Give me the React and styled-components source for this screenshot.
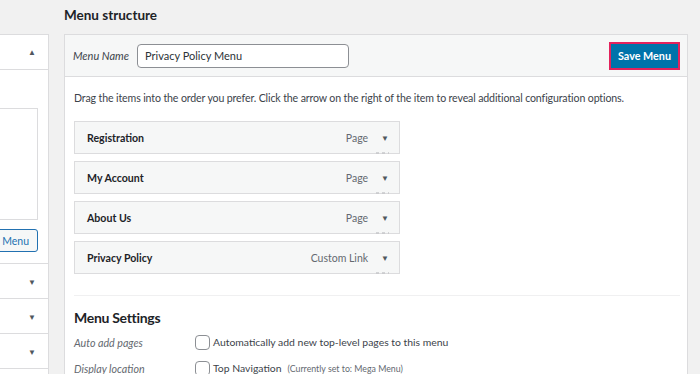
import React from "react";
import styled, { createGlobalStyle } from "styled-components";

const Global = createGlobalStyle`
  html, body { margin: 0; padding: 0; }
  body {
    background: #f1f1f1;
    font-family: Lato, "Open Sans", sans-serif;
    color: #1d2327;
    overflow: hidden;
  }
  * { box-sizing: border-box; }
`;

const Page = styled.div`
  display: flex;
  gap: 15px;
  width: 700px;
  height: 374px;
  overflow: hidden;
`;

const SideCol = styled.div`
  width: 49px;
  flex: none;
  padding-top: 34px;
  display: flex;
  justify-content: flex-end;
  overflow: hidden;
`;

const SidePanel = styled.div`
  width: 280px;
  flex: none;
  background: #fff;
  border: 1px solid #dcdcde;
  border-bottom: none;
`;

const SideHeader = styled.div`
  height: 35px;
  border-bottom: 1px solid #dcdcde;
  display: flex;
  align-items: center;
  justify-content: flex-end;
  padding-right: 12px;
`;

const Caret = styled.span`
  font-size: 8px;
  color: #50575e;
  line-height: 1;
`;

const SideBody = styled.div`
  padding: 38px 10px 11px 0;
  display: flex;
  flex-direction: column;
  align-items: flex-end;
  gap: 9px;
  border-bottom: 1px solid #dcdcde;
`;

const ListBox = styled.div`
  width: 260px;
  height: 112px;
  border: 1px solid #dcdcde;
  background: #fff;
`;

const AddButton = styled.button`
  font-family: inherit;
  font-size: 10.5px;
  height: 23px;
  padding: 0 8px;
  border: 1px solid #2271b1;
  border-radius: 3px;
  background: #f6f7f7;
  color: #2271b1;
`;

const SideRow = styled.div`
  height: 35px;
  border-bottom: 1px solid #dcdcde;
  display: flex;
  align-items: center;
  justify-content: flex-end;
  padding: 2px 12px 0 0;
`;

const MainCol = styled.div`
  flex: 1;
  margin-right: 12px;
  display: flex;
  flex-direction: column;
`;

const Title = styled.h2`
  flex: none;
  margin: 0;
  height: 34px;
  padding-top: 6px;
  font-size: 13.5px;
  font-weight: 700;
  line-height: 18px;
  color: #1d2327;
`;

const Panel = styled.div`
  flex: none;
  height: 400px;
  border: 1px solid #dcdcde;
  border-bottom: none;
  background: #fff;
`;

const PanelHeader = styled.div`
  height: 42px;
  background: #f6f7f7;
  border-bottom: 1px solid #dcdcde;
  display: flex;
  align-items: center;
  padding: 0 7px 0 8px;
`;

const NameLabel = styled.label`
  font-size: 11px;
  font-style: italic;
  color: #3c434a;
  margin-right: 8px;
`;

const NameInput = styled.div`
  width: 212px;
  height: 24px;
  border: 1px solid #8c8f94;
  border-radius: 4px;
  background: #fff;
  font-size: 11px;
  color: #2c3338;
  display: flex;
  align-items: center;
  padding-left: 7px;
`;

const SaveButton = styled.button`
  margin-left: auto;
  height: 28px;
  width: 71px;
  padding: 0;
  font-family: inherit;
  font-size: 10.8px;
  font-weight: 700;
  color: #fff;
  background: #0073aa;
  border: 2px solid #e3225c;
  border-radius: 0;
`;

const PanelBody = styled.div`
  padding: 13px 7px 0 9px;
`;

const Instructions = styled.p`
  margin: 0 0 15px;
  font-size: 10.6px;
  letter-spacing: -0.13px;
  line-height: 16px;
  white-space: nowrap;
  color: #3c434a;
`;

const ItemList = styled.div`
  display: flex;
  flex-direction: column;
  gap: 7px;
  width: 326px;
`;

const Item = styled.div`
  position: relative;
  height: 33px;
  background: #f6f7f7;
  border: 1px solid #dcdcde;
  display: flex;
  align-items: center;
  padding: 0 10px 0 12px;

  &::after {
    content: "";
    position: absolute;
    right: 10px;
    bottom: -1px;
    width: 13px;
    height: 2px;
    background: repeating-linear-gradient(90deg, #c3c4c7 0 3px, transparent 3px 6px);
    opacity: 0.7;
  }
`;

const ItemTitle = styled.span`
  font-size: 10.6px;
  font-weight: 700;
  color: #1d2327;
`;

const ItemType = styled.span`
  margin-left: auto;
  font-size: 10.5px;
  color: #646970;
`;

const ItemArrow = styled.span`
  margin-left: 13px;
  font-size: 8px;
  color: #50575e;
`;

const Divider = styled.hr`
  margin: 21px 0 0;
  border: none;
  border-top: 1px solid #f0f0f1;
`;

const SettingsTitle = styled.h3`
  margin: 12px 0 1px;
  font-size: 14px;
  letter-spacing: -0.3px;
  line-height: 20px;
  font-weight: 700;
  color: #1d2327;
`;

const SettingRow = styled.div`
  display: grid;
  grid-template-columns: 121px 1fr;
  align-items: center;
  height: 26px;
`;

const SettingLabel = styled.span`
  font-size: 10.7px;
  font-style: italic;
  color: #646970;
`;

const CheckLine = styled.label`
  display: flex;
  align-items: center;
  gap: 3px;
  font-size: 10.4px;
  color: #3c434a;
`;

const Box = styled.span`
  width: 15px;
  height: 15px;
  border: 1px solid #8c8f94;
  border-radius: 4px;
  background: #fff;
  flex: none;
`;

const Small = styled.span`
  font-size: 8.8px;
  color: #646970;
  margin-left: 3px;
`;

const items = [
  ["Registration", "Page"],
  ["My Account", "Page"],
  ["About Us", "Page"],
  ["Privacy Policy", "Custom Link"],
];

export default function App() {
  return (
    <>
      <Global />
      <Page>
        <SideCol>
          <SidePanel>
            <SideHeader>
              <Caret>▲</Caret>
            </SideHeader>
            <SideBody>
              <ListBox />
              <AddButton>Add to Menu</AddButton>
            </SideBody>
            <SideRow><Caret>▼</Caret></SideRow>
            <SideRow><Caret>▼</Caret></SideRow>
            <SideRow><Caret>▼</Caret></SideRow>
          </SidePanel>
        </SideCol>
        <MainCol>
          <Title>Menu structure</Title>
          <Panel>
            <PanelHeader>
              <NameLabel>Menu Name</NameLabel>
              <NameInput>Privacy Policy Menu</NameInput>
              <SaveButton>Save Menu</SaveButton>
            </PanelHeader>
            <PanelBody>
              <Instructions>
                Drag the items into the order you prefer. Click the arrow on the right of the item to reveal additional configuration options.
              </Instructions>
              <ItemList>
                {items.map(([t, k]) => (
                  <Item key={t}>
                    <ItemTitle>{t}</ItemTitle>
                    <ItemType>{k}</ItemType>
                    <ItemArrow>▼</ItemArrow>
                  </Item>
                ))}
              </ItemList>
              <Divider />
              <SettingsTitle>Menu Settings</SettingsTitle>
              <SettingRow>
                <SettingLabel>Auto add pages</SettingLabel>
                <CheckLine>
                  <Box />
                  Automatically add new top-level pages to this menu
                </CheckLine>
              </SettingRow>
              <SettingRow>
                <SettingLabel>Display location</SettingLabel>
                <CheckLine>
                  <Box />
                  Top Navigation<Small>(Currently set to: Mega Menu)</Small>
                </CheckLine>
              </SettingRow>
            </PanelBody>
          </Panel>
        </MainCol>
      </Page>
    </>
  );
}
